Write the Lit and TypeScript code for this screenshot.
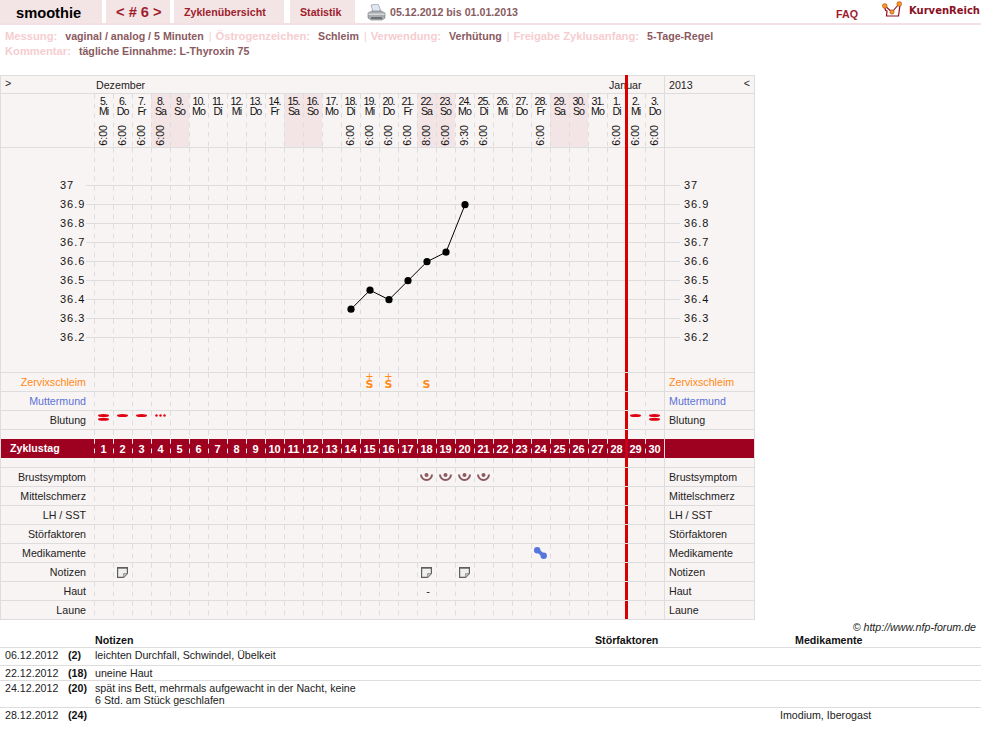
import { LitElement, html, css, svg } from 'lit'
import { customElement } from 'lit/decorators.js'

const days = [
  ['5.', 'Mi', '6:00'], ['6.', 'Do', '6:00'], ['7.', 'Fr', '6:00'], ['8.', 'Sa', '6:00'], ['9.', 'So', ''],
  ['10.', 'Mo', ''], ['11.', 'Di', ''], ['12.', 'Mi', ''], ['13.', 'Do', ''], ['14.', 'Fr', ''],
  ['15.', 'Sa', ''], ['16.', 'So', ''], ['17.', 'Mo', ''], ['18.', 'Di', '6:00'], ['19.', 'Mi', '6:00'],
  ['20.', 'Do', '6:00'], ['21.', 'Fr', '6:00'], ['22.', 'Sa', '8:00'], ['23.', 'So', '6:00'], ['24.', 'Mo', '9:30'],
  ['25.', 'Di', '6:00'], ['26.', 'Mi', ''], ['27.', 'Do', ''], ['28.', 'Fr', '6:00'], ['29.', 'Sa', ''],
  ['30.', 'So', ''], ['31.', 'Mo', ''], ['1.', 'Di', '6:00'], ['2.', 'Mi', '6:00'], ['3.', 'Do', '6:00'],
]

const NOW = 28
const temps = [37, 36.9, 36.8, 36.7, 36.6, 36.5, 36.4, 36.3, 36.2]
const curve: [number, number][] = [[13, 36.35], [14, 36.45], [15, 36.4], [16, 36.5], [17, 36.6], [18, 36.65], [19, 36.9]]

const tempY = (t: number) => 185 + (37 - t) * 190
const colX = (i: number) => 94 + i * 19 + 10

const bleed = (n: number) => html`<svg class="top" width="11" height="7" viewBox="0 0 11 7">
  ${n === 3
    ? svg`<circle cx="1.5" cy="1.5" r="1.2" fill="#e00010"/><circle cx="5.5" cy="1.5" r="1.2" fill="#e00010"/><circle cx="9.5" cy="1.5" r="1.2" fill="#e00010"/>`
    : svg`<ellipse cx="5.5" cy="1.5" rx="5.5" ry="1.5" fill="#e00010"/>`}
  ${n === 2 ? svg`<ellipse cx="5.5" cy="5.3" rx="5.5" ry="1.5" fill="#e00010"/>` : ''}
</svg>`

const slime = (plus: boolean) => html`<span class="slime"><i class=${plus ? '' : 'hide'}>+</i><b>S</b></span>`

const breast = html`<svg width="13" height="10" viewBox="0 0 13 10">
  <path d="M1 2.5a5.5 5.5 0 0 0 11 0" fill="none" stroke="#8a5a60" stroke-width="2"/>
  <circle cx="6.5" cy="3" r="2" fill="#8a5a60"/>
</svg>`

const note = html`<svg width="11" height="11" viewBox="0 0 11 11">
  <path d="M.6.6h9.8v6l-3.8 3.8H.6z" fill="#f1efee" stroke="#5e5e5e" stroke-width="1.2"/>
  <path d="M0 .8h11" stroke="#5e5e5e" stroke-width="1.6"/>
  <path d="M6.5 10.4V6.5h3.9z" fill="#bdbdbd" stroke="#7a7a7a" stroke-width=".6"/>
</svg>`

const pill = html`<svg width="13" height="12" viewBox="0 0 13 12">
  <path d="M3.2 3.2l6.4 5.4" stroke="#5577dd" stroke-width="3.6"/>
  <circle cx="3.2" cy="3.2" r="3.2" fill="#5577dd"/>
  <circle cx="9.7" cy="8.7" r="3.2" fill="#5577dd"/>
</svg>`

const printer = html`<svg width="19" height="17" viewBox="0 0 19 17">
  <path d="M4 1l7-1 3 7-8 1z" fill="#dfe8f2" stroke="#8f9aa6" stroke-width=".7"/>
  <path d="M1 9l4-2h9l4 2v5l-3 2H4l-3-2z" fill="#a9adb1" stroke="#777" stroke-width=".6"/>
  <path d="M1.5 9.5h16v1.5h-16z" fill="#d6d8da"/>
  <path d="M4 13h11v2H4z" fill="#6f7275"/>
</svg>`

const logo = html`<svg width="20" height="17" viewBox="0 0 20 17">
  <path d="M3 7c0 2 1 3 2 3l-.5 5h12L18 4" fill="none" stroke="#8b0e1f" stroke-width="1.2"/>
  <path d="M3 5l7 6 7-8" fill="none" stroke="#8b0e1f" stroke-width="1.1"/>
  <circle cx="2.8" cy="5" r="2.4" fill="#f39a1e" stroke="#a8361a" stroke-width=".5"/>
  <circle cx="10" cy="11" r="2.2" fill="#f39a1e" stroke="#a8361a" stroke-width=".5"/>
  <circle cx="17.2" cy="3" r="2.4" fill="#f39a1e" stroke="#a8361a" stroke-width=".5"/>
</svg>`

const upper = [
  { label: 'Zervixschleim', cls: 'orange', marks: { 14: slime(true), 15: slime(true), 17: slime(false) } },
  { label: 'Muttermund', cls: 'blue', marks: {} },
  { label: 'Blutung', cls: '', marks: { 0: bleed(2), 1: bleed(1), 2: bleed(1), 3: bleed(3), 28: bleed(1), 29: bleed(2) } },
]

const lower = [
  { label: 'Brustsymptom', cls: '', marks: { 17: breast, 18: breast, 19: breast, 20: breast } },
  { label: 'Mittelschmerz', cls: '', marks: {} },
  { label: 'LH / SST', cls: '', marks: {} },
  { label: 'Störfaktoren', cls: '', marks: {} },
  { label: 'Medikamente', cls: '', marks: { 23: pill } },
  { label: 'Notizen', cls: '', marks: { 1: note, 17: note, 19: note } },
  { label: 'Haut', cls: '', marks: { 17: html`<span class="dash">-</span>` } },
  { label: 'Laune', cls: '', marks: {} },
]

const notes = [
  { date: '06.12.2012', day: '(2)', text: ['leichten Durchfall, Schwindel, Übelkeit'], med: '', tall: true },
  { date: '22.12.2012', day: '(18)', text: ['uneine Haut'], med: '', tall: false },
  { date: '24.12.2012', day: '(20)', text: ['spät ins Bett, mehrmals aufgewacht in der Nacht, keine', '6 Std. am Stück geschlafen'], med: '', tall: false },
  { date: '28.12.2012', day: '(24)', text: [], med: 'Imodium, Iberogast', tall: false },
]

@customElement('app-root')
export class AppRoot extends LitElement {
  static styles = css`
    :host {
      display: block;
      width: 981px;
      height: 753px;
      background: #fff;
      font-family: 'Liberation Sans', Arial, sans-serif;
      font-size: 10.67px;
      color: #222;
    }

    .header {
      display: flex;
      height: 25px;
      box-sizing: border-box;
      border-bottom: 2px solid #f3e0e3;
    }
    .tab {
      background: #f3e4e6;
      color: #a01c2c;
      font-weight: bold;
      line-height: 24px;
      padding-left: 10px;
      box-sizing: border-box;
      white-space: nowrap;
    }
    .tab.name { width: 102px; padding-left: 16px; margin-right: 4px; color: #000; font-size: 14.67px; line-height: 26px; }
    .tab.nav { width: 64px; margin-right: 4px; font-size: 14.67px; line-height: 25px; }
    .tab.over { width: 110px; margin-right: 6px; }
    .tab.stat { width: 65px; }
    .print { margin: 4px 4px 0 12px; }
    .range { color: #8a5a60; font-weight: bold; line-height: 24px; }
    .faq { margin-left: auto; margin-right: 24px; color: #a01c2c; font-weight: bold; line-height: 28px; }
    .logo { margin-top: 1px; margin-right: 7px; }
    .brand {
      font-family: 'DejaVu Sans', sans-serif;
      font-size: 10px;
      font-weight: bold;
      color: #8b0e1f;
      line-height: 21px;
      margin-right: 1px;
    }

    .meta {
      height: 50px;
      box-sizing: border-box;
      padding: 4px 5px 0;
      font-weight: bold;
      line-height: 15px;
    }
    .meta-line { display: flex; white-space: nowrap; }
    .lbl { color: #f5cdd0; margin-right: 8px; font-size: 11.2px; }
    .val { color: #8a5a60; margin-right: 5px; }
    .pipe { color: #f5cdd0; margin-right: 4px; font-weight: normal; }

    .grid {
      width: 755px;
      box-sizing: border-box;
      border: 1px solid #ddd;
      border-bottom: 0;
      background: #f9f4f4;
    }
    .row {
      display: grid;
      grid-template-columns: 93px repeat(30, 19px) 90px;
      height: 19px;
      box-sizing: border-box;
      border-bottom: 1px solid #ddd;
      line-height: 18px;
    }
    .row.month { height: 18px; line-height: 18px; }
    .row.dates { height: 54px; }
    .row.chart { height: 225px; position: relative; }
    .row.gap-a { height: 9px; border-bottom: 0; }
    .row.gap-b { height: 10px; }
    .row.band {
      border-bottom: 0;
      background: #9e0020;
      color: #fff;
      font-weight: bold;
      font-size: 11px;
      --dash: #f1e6e6;
      --now: #c8001a;
    }

    .left { text-align: right; padding-right: 8px; }
    .left.arrow, .left.title { text-align: left; padding-left: 4px; padding-right: 0; }
    .left.arrow { line-height: 15px; }
    .left.title { padding-left: 9px; font-size: 10.67px; }
    .right { border-left: 1px solid #ddd; padding-left: 4px; display: flex; justify-content: space-between; padding-right: 4px; }
    .right .back { line-height: 15px; }
    .band .right { border-left-color: #e8dcdc; }
    .orange { color: #ff8a14; }
    .blue { color: #5a72d6; }

    .day {
      position: relative;
      display: flex;
      align-items: center;
      justify-content: center;
      background-image: linear-gradient(var(--dash, #ddd) 50%, transparent 50%);
      background-size: 1px 9.5px;
      background-repeat: repeat-y;
      background-position: 0 0;
    }
    .day.weekend { background-color: #f3e4e6; }
    .day.stack {
      flex-direction: column;
      justify-content: space-between;
      padding: 2px 0 1px;
      box-sizing: border-box;
      color: #111;
    }
    .date { text-align: center; font-size: 10.67px; line-height: 10px; letter-spacing: -1px; }
    .time { writing-mode: vertical-rl; transform: rotate(180deg); line-height: 11px; }
    .now {
      position: absolute;
      left: -1px;
      top: 0;
      bottom: 0;
      width: 3px;
      background: var(--now, #d80000);
      z-index: 2;
    }
    .now.join { bottom: -1px; }
    .now.cap { top: -1px; }

    .span-dez { grid-column: span 27; padding-left: 2px; }
    .span-jan { grid-column: span 3; padding-left: 2px; position: relative; }
    .span-jan .now { left: 18px; }

    .plot { position: absolute; left: 0; top: 0; width: 753px; height: 224px; z-index: 1; }
    .plot text { font: 11px 'Liberation Sans', Arial, sans-serif; letter-spacing: 1px; fill: #111; }

    .top { align-self: flex-start; margin-top: 3px; }
    .slime {
      display: flex;
      flex-direction: column;
      align-items: center;
      color: #ff8a14;
      align-self: flex-start;
      font-style: normal;
    }
    .slime i { font: 10px/7px 'DejaVu Sans', sans-serif; height: 7px; }
    .slime i.hide { visibility: hidden; }
    .slime b { font: bold 11px/9px 'DejaVu Sans', sans-serif; }
    .dash { font-size: 11px; padding-left: 3px; }

    .credit { text-align: right; font-style: italic; padding-right: 5px; height: 14px; line-height: 15px; color: #222; }

    .notes-head, .note {
      display: grid;
      grid-template-columns: 68px 27px 500px 185px 1fr;
      border-bottom: 1px solid #ddd;
      line-height: 12px;
      box-sizing: border-box;
    }
    .notes-head { height: 14px; font-weight: bold; color: #111; }
    .notes-head .med { padding-left: 15px; }
    .note { padding: 1px 0; }
    .note:last-child { border-bottom: 0; }
    .note.tall { padding-bottom: 4px; }
    .note .when { padding-left: 5px; }
    .note b { color: #111; }
    .note .text { width: 275px; }
  `

  private renderCells(marks: Record<number, unknown>, join = false) {
    return days.map((_, i) => html`<div class="day">
      ${marks[i] ?? ''}
      ${i === NOW ? html`<span class="now ${join ? 'join' : ''}"></span>` : ''}
    </div>`)
  }

  private renderRow(r: { label: string; cls: string; marks: Record<number, unknown> }) {
    return html`<div class="row">
      <div class="left ${r.cls}">${r.label}</div>
      ${this.renderCells(r.marks)}
      <div class="right ${r.cls}">${r.label}</div>
    </div>`
  }

  private renderPlot() {
    const points = curve.map(([i, t]) => `${colX(i)},${tempY(t) + 0.7}`).join(' ')
    return html`<svg class="plot" viewBox="1 148 753 224">
      ${temps.map(t => svg`
        <line x1="86" x2="680" y1=${tempY(t) + 0.5} y2=${tempY(t) + 0.5} stroke="#ddd"/>
        <text x="60" y=${tempY(t) + 3.5}>${t}</text>
        <text x="684" y=${tempY(t) + 3.5}>${t}</text>
      `)}
      <polyline points=${points} fill="none" stroke="#000"/>
      ${curve.map(([i, t]) => svg`<circle cx=${colX(i)} cy=${tempY(t) + 0.7} r="3.6" fill="#000"/>`)}
    </svg>`
  }

  render() {
    return html`
      <div class="header">
        <div class="tab name">smoothie</div>
        <div class="tab nav">&lt; # 6 &gt;</div>
        <div class="tab over">Zyklenübersicht</div>
        <div class="tab stat">Statistik</div>
        <div class="print">${printer}</div>
        <div class="range">05.12.2012 bis 01.01.2013</div>
        <div class="faq">FAQ</div>
        <div class="logo">${logo}</div>
        <div class="brand">KurvenReich</div>
      </div>

      <div class="meta">
        <div class="meta-line">
          <span class="lbl">Messung:</span><span class="val">vaginal / analog / 5 Minuten</span><span class="pipe">|</span>
          <span class="lbl">Östrogenzeichen:</span><span class="val">Schleim</span><span class="pipe">|</span>
          <span class="lbl">Verwendung:</span><span class="val">Verhütung</span><span class="pipe">|</span>
          <span class="lbl">Freigabe Zyklusanfang:</span><span class="val">5-Tage-Regel</span>
        </div>
        <div class="meta-line">
          <span class="lbl">Kommentar:</span><span class="val">tägliche Einnahme: L-Thyroxin 75</span>
        </div>
      </div>

      <div class="grid">
        <div class="row month">
          <div class="left arrow">&gt;</div>
          <div class="span-dez">Dezember</div>
          <div class="span-jan">Januar<span class="now join cap"></span></div>
          <div class="right"><span>2013</span><span class="back">&lt;</span></div>
        </div>

        <div class="row dates">
          <div class="left"></div>
          ${days.map(([d, w, t], i) => html`<div class="day stack ${w === 'Sa' || w === 'So' ? 'weekend' : ''}">
            <div class="date">${d}<br />${w}</div>
            ${t ? html`<div class="time">${t}</div>` : ''}
            ${i === NOW ? html`<span class="now join"></span>` : ''}
          </div>`)}
          <div class="right"></div>
        </div>

        <div class="row chart">
          <div class="left"></div>
          ${this.renderCells({})}
          <div class="right"></div>
          ${this.renderPlot()}
        </div>

        ${upper.map(r => this.renderRow(r))}

        <div class="row gap-a"><div class="left"></div>${this.renderCells({})}<div class="right"></div></div>

        <div class="row band">
          <div class="left title">Zyklustag</div>
          ${this.renderCells(Object.fromEntries(days.map((_, i) => [i, `${i + 1}`])))}
          <div class="right"></div>
        </div>

        <div class="row gap-b"><div class="left"></div>${this.renderCells({})}<div class="right"></div></div>

        ${lower.map(r => this.renderRow(r))}
      </div>

      <div class="credit">© http://www.nfp-forum.de</div>

      <div class="notes-head">
        <span></span><span></span><span>Notizen</span><span>Störfaktoren</span><span class="med">Medikamente</span>
      </div>
      ${notes.map(n => html`<div class="note ${n.tall ? 'tall' : ''}">
        <span class="when">${n.date}</span>
        <b>${n.day}</b>
        <div class="text">${n.text.map(l => html`${l}<br />`)}</div>
        <span></span>
        <span>${n.med}</span>
      </div>`)}
    `
  }
}
